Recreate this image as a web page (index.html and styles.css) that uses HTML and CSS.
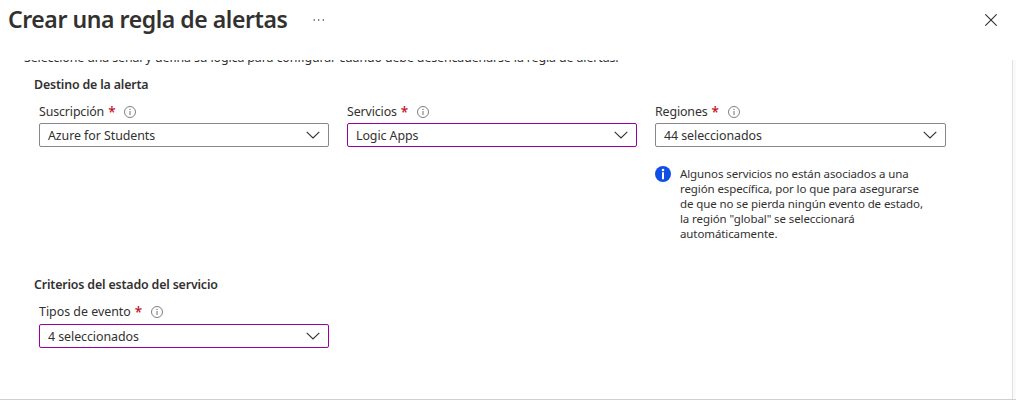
FILE: index.html
```html
<!DOCTYPE html>
<html lang="es">
<head>
<meta charset="utf-8">
<title>Crear una regla de alertas</title>
<link rel="stylesheet" href="styles.css">
</head>
<body>
<svg class="defs" width="0" height="0">
  <symbol id="info" viewBox="0 0 12 12"><circle cx="6" cy="6" r="5.5" fill="none" stroke="#605e5c" stroke-width=".8"/><path d="M6 5v4" stroke="#605e5c" stroke-width=".9"/><circle cx="6" cy="3.4" r=".6" fill="#605e5c"/></symbol>
  <symbol id="chevron" viewBox="0 0 14 8"><path d="M.7.8 7 7 13.3.8" fill="none" stroke="#323130" stroke-width="1.1"/></symbol>
</svg>
<header class="header">
  <h1 class="title">Crear una regla de alertas</h1>
  <svg class="more" width="12" height="2" viewBox="0 0 12 2" fill="#323130"><circle cx="1.2" cy="1" r=".75"/><circle cx="5.7" cy="1" r=".75"/><circle cx="10.3" cy="1" r=".75"/></svg>
  <svg class="close" width="12" height="12" viewBox="0 0 12 12"><path d="M.3.3l11.4 11.4M11.7.3.3 11.7" stroke="#323130" stroke-width="1.1"/></svg>
</header>
<main class="content">
  <div class="pane">
    <p class="intro">Seleccione una señal y defina su lógica para configurar cuándo debe desencadenarse la regla de alertas.</p>
    <section class="section target">
      <h2 class="heading">Destino de la alerta</h2>
      <div class="fields">
        <div class="field">
          <div class="label"><span class="name">Suscripción</span><span class="required">*</span><svg class="info"><use href="#info"/></svg></div>
          <div class="select"><span class="value">Azure for Students</span><svg class="chevron"><use href="#chevron"/></svg></div>
        </div>
        <div class="field">
          <div class="label"><span class="name">Servicios</span><span class="required">*</span><svg class="info"><use href="#info"/></svg></div>
          <div class="select changed"><span class="value">Logic Apps</span><svg class="chevron"><use href="#chevron"/></svg></div>
        </div>
        <div class="field wide">
          <div class="label"><span class="name">Regiones</span><span class="required">*</span><svg class="info"><use href="#info"/></svg></div>
          <div class="select"><span class="value">44 seleccionados</span><svg class="chevron"><use href="#chevron"/></svg></div>
          <div class="note">
            <svg class="note-icon" width="16" height="16" viewBox="0 0 16 16"><circle cx="8" cy="8" r="8" fill="#0f4fe6"/><circle cx="8" cy="4" r="1.3" fill="#fff"/><path d="M8 6.3v7" stroke="#fff" stroke-width="2"/></svg>
            <p class="note-text">Algunos servicios no están asociados a una<br>región específica, por lo que para asegurarse<br>de que no se pierda ningún evento de estado,<br>la región "global" se seleccionará<br>automáticamente.</p>
          </div>
        </div>
      </div>
    </section>
    <section class="section">
      <h2 class="heading">Criterios del estado del servicio</h2>
      <div class="fields">
        <div class="field">
          <div class="label"><span class="name types">Tipos de evento</span><span class="required">*</span><svg class="info"><use href="#info"/></svg></div>
          <div class="select changed lower"><span class="value">4 seleccionados</span><svg class="chevron"><use href="#chevron"/></svg></div>
        </div>
      </div>
    </section>
  </div>
  <div class="scrollbar"></div>
</main>
</body>
</html>
```
FILE: styles.css
```css
* { box-sizing: border-box; }
body { margin: 0; height: 404px; overflow: hidden; background: #fff; color: #323130; font: 12.4px/16px "Noto Sans", "Open Sans", sans-serif; white-space: nowrap; }
h1, h2, p { margin: 0; }
svg { display: block; flex: none; }
.defs { position: absolute; }
.header { display: flex; align-items: center; height: 60px; padding: 0 19px 20px 8px; }
.title { width: 305px; padding-bottom: 1px; font-size: 23px; line-height: 31px; font-weight: 600; letter-spacing: -.43px; }
.close { margin-left: auto; }
.content { display: flex; height: 340px; overflow: hidden; border-bottom: 1px solid #d2d0ce; }
.pane { flex: 1; min-width: 0; }
.scrollbar { width: 4px; background: #fafafa; border-left: 1px solid #e1e1e1; }
.intro { height: 16px; margin: -10px 0 11px 24px; letter-spacing: -.11px; }
.section { padding-left: 34px; }
.target { height: 200px; }
.heading { height: 16px; font-size: 12.4px; line-height: 16px; font-weight: 600; letter-spacing: -.16px; }
.fields { display: flex; gap: 18px; padding: 10px 0 0 5px; }
.field { width: 290px; }
.wide { width: 291px; }
.label { display: flex; align-items: center; height: 18px; }
.name { letter-spacing: -.13px; }
.types { letter-spacing: 0; }
.required { width: 7px; margin-left: 4px; color: #c50f1f; font-size: 13.5px; font-weight: 500; }
.info { width: 12px; height: 12px; margin-left: 9px; }
.select { display: flex; align-items: center; justify-content: space-between; height: 24px; margin-top: 2px; padding: 0 8px; border: 1px solid #8a8886; border-radius: 2px; }
.value { padding-top: 2px; letter-spacing: -.06px; }
.changed { border-color: #9b00a5; }
.lower { margin-top: 3px; }
.chevron { width: 14px; height: 8px; }
.note { display: flex; gap: 9px; margin-top: 19px; }
.note-text { font-size: 11.5px; line-height: 15px; letter-spacing: -.1px; }
```
